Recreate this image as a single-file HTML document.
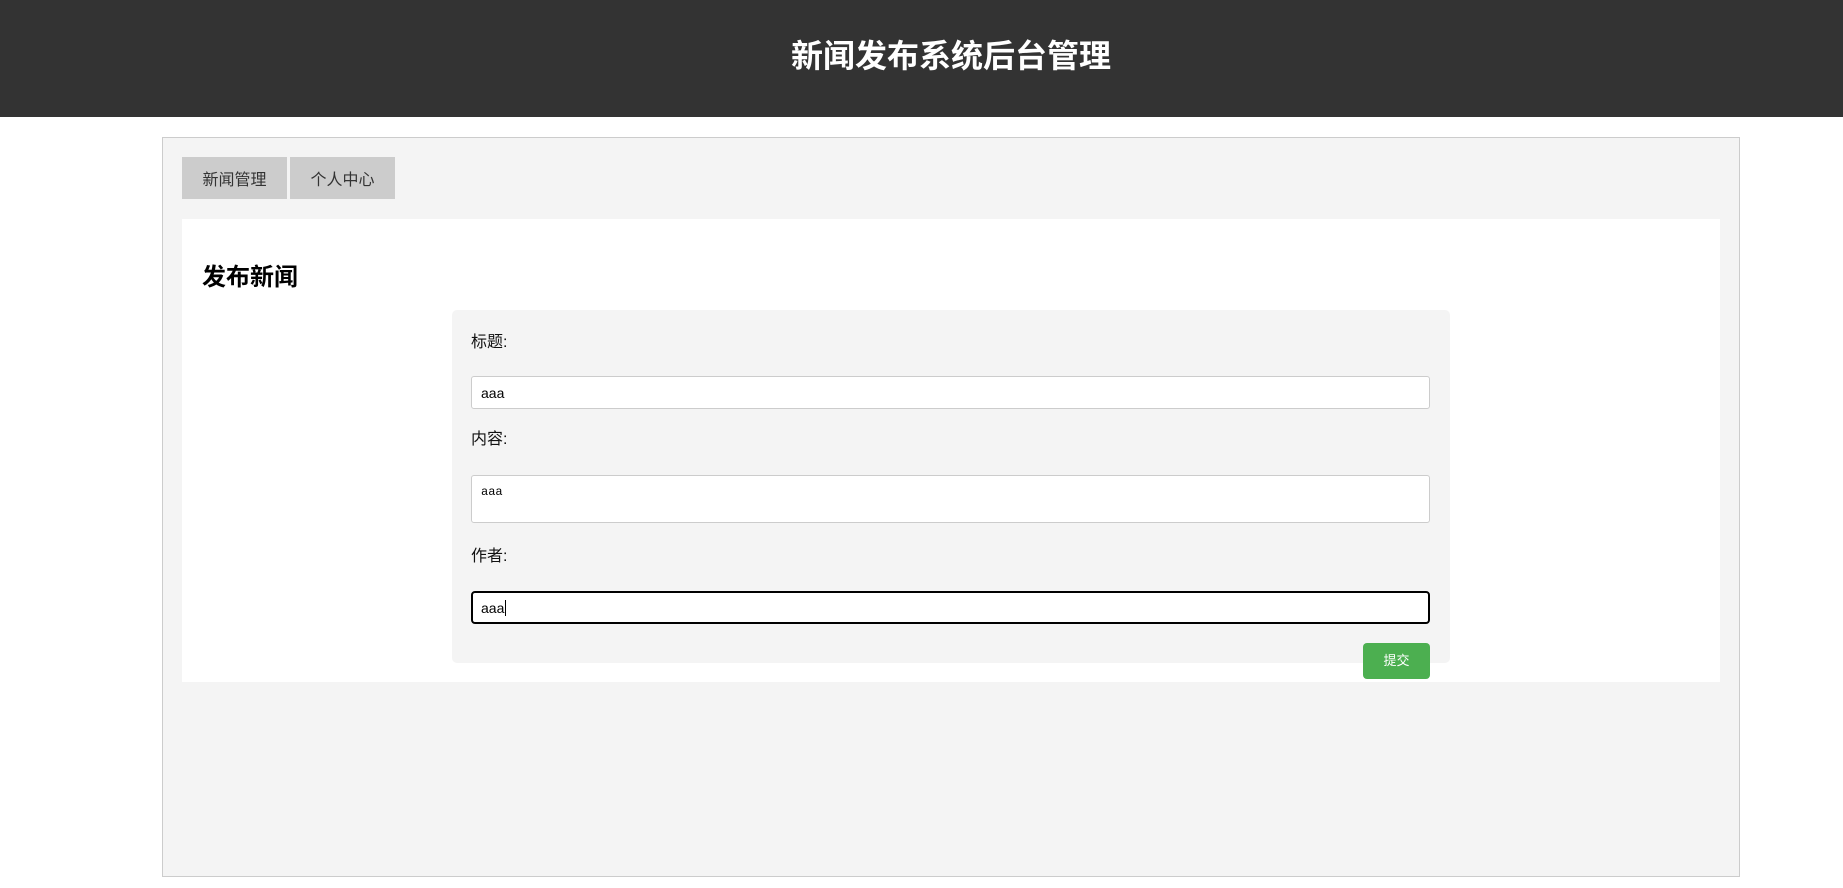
<!DOCTYPE html>
<html><head><meta charset="utf-8"><style>
*{box-sizing:border-box;margin:0;padding:0}
body{width:1843px;height:888px;position:relative;background:#fff;font-family:"Liberation Sans","Noto Sans CJK SC",sans-serif;overflow:hidden}
.a{position:absolute}
#hd{left:0;top:0;width:1843px;height:117px;background:#333}
#ttl{left:0;width:1902px;top:34px;text-align:center;color:#fff;font-size:32px;font-weight:bold;line-height:44px}
#ct{left:162px;top:137px;width:1578px;height:740px;border:1px solid #ccc;background:#f4f4f4}
.tab{top:157px;width:105px;height:42px;background:#ccc;color:#333;font-size:16px;line-height:48px;text-align:center}
#wp{left:182px;top:219px;width:1538px;height:463px;background:#fff}
#h2{left:202px;top:262px;font-size:24px;font-weight:bold;line-height:32px;color:#000}
#fb{left:452px;top:310px;width:998px;height:353px;background:#f4f4f4;border-radius:5px}
.lb{left:471px;font-size:16px;color:#111;line-height:22px}
.in{left:471px;width:959px;background:#fff;border:1px solid #ccc;border-radius:3px;font-size:14px;padding-left:9px;color:#000}
#bt{left:1363px;top:643px;width:67px;height:36px;background:#4caf50;border-radius:4px;color:#fff;font-size:13px;line-height:36px;text-align:center}
</style></head><body>
<div class="a" id="hd"></div>
<div class="a" id="ttl">新闻发布系统后台管理</div>
<div class="a" id="ct"></div>
<div class="a tab" style="left:182px">新闻管理</div>
<div class="a tab" style="left:290px">个人中心</div>
<div class="a" id="wp"></div>
<div class="a" id="h2">发布新闻</div>
<div class="a" id="fb"></div>
<div class="a lb" style="top:332px">标题:</div>
<div class="a in" style="top:376px;height:33px;line-height:33px">aaa</div>
<div class="a lb" style="top:429px">内容:</div>
<div class="a in" style="top:475px;height:48px;font-family:'Liberation Mono',monospace;font-size:12px;padding-top:9px">aaa</div>
<div class="a lb" style="top:546px">作者:</div>
<div class="a in" style="top:591px;height:33px;line-height:31px;border:2px solid #000;border-radius:4px;padding-left:8px">aaa<span style="border-left:1px solid #000;margin-left:1px"></span></div>
<div class="a" id="bt">提交</div>
</body></html>
